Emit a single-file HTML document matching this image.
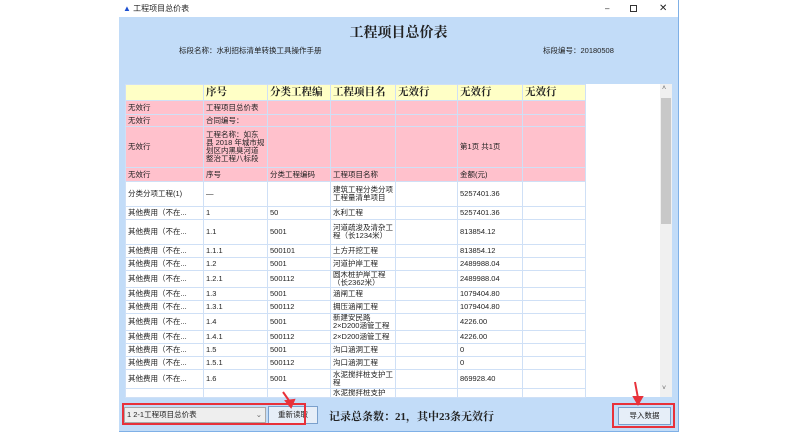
<!DOCTYPE html>
<html><head><meta charset="utf-8"><style>
*{margin:0;padding:0;box-sizing:border-box}
body{width:800px;height:437px;background:#fff;position:relative;overflow:hidden;font-family:"Liberation Sans","Noto Sans CJK SC",sans-serif;font-size:8px;color:#222}
.win{position:absolute;left:119px;top:0;width:560px;height:432px;background:#c2dcf8;border-right:1px solid #7fb0e6;border-bottom:1px solid #7fb0e6}
.tb{position:absolute;left:0;top:0;width:100%;height:17px;background:#fff;font-size:8px;line-height:17px}
.abs{position:absolute}
table{position:absolute;left:6px;top:84px;border-collapse:collapse;table-layout:fixed;background:#fff}
td{border:1px solid #cfe0f6;padding:0 2px;vertical-align:middle;line-height:8px;font-size:7.5px;overflow:hidden;white-space:nowrap}
td.w{white-space:normal}
tr.h td{background:#ffffc6;font-family:"Liberation Serif","Noto Serif CJK SC",serif;font-weight:bold;font-size:10.5px;line-height:12px}
tr.p td{background:#ffc1cc}
.red{position:absolute;border:2px solid #e8313a}
</style></head><body>
<div class="win">
 <div class="tb"><span style="color:#1c4fd0;margin-left:4px">▲</span> 工程项目总价表
  <span class="abs" style="left:486px;top:0">–</span><span class="abs" style="left:511px;top:5px;width:7px;height:7px;border:1px solid #333"></span><span class="abs" style="left:540px;top:0;font-size:10px">✕</span></div>
 <div class="abs" style="left:0;top:22px;width:100%;text-align:center;font-family:'Liberation Serif','Noto Serif CJK SC',serif;font-weight:bold;font-size:14px">工程项目总价表</div>
 <div class="abs" style="left:60px;top:45px;font-size:7.5px">标段名称：水利招标清单转换工具操作手册</div>
 <div class="abs" style="left:424px;top:45px;font-size:7.5px">标段编号：20180508</div>
 <div class="abs" style="left:6px;top:84px;width:547px;height:313px;background:#fff"></div>
 <div class="abs" style="left:541px;top:84px;width:12px;height:313px;background:#f0f0f0"></div>
 <div class="abs" style="left:542px;top:98px;width:10px;height:126px;background:#c8c8c8"></div>
 <div class="abs" style="left:543px;top:85px;font-size:7px;color:#666">˄</div>
 <div class="abs" style="left:543px;top:385px;font-size:7px;color:#666">˅</div>
 <table>
  <colgroup><col style="width:78px"><col style="width:64px"><col style="width:63px"><col style="width:65px"><col style="width:62px"><col style="width:65px"><col style="width:63px"></colgroup>
  <tr class="h" style="height:16px"><td></td><td>序号</td><td>分类工程编</td><td>工程项目名</td><td>无效行</td><td>无效行</td><td>无效行</td></tr>
  <tr class="p" style="height:14px"><td>无效行</td><td>工程项目总价表</td><td></td><td></td><td></td><td></td><td></td></tr>
  <tr class="p" style="height:12px"><td>无效行</td><td>合同编号：</td><td></td><td></td><td></td><td></td><td></td></tr>
  <tr class="p" style="height:41px"><td>无效行</td><td class="w">工程名称：如东县 2018 年城市规划区内黑臭河道整治工程八标段</td><td></td><td></td><td></td><td>第1页 共1页</td><td></td></tr>
  <tr class="p" style="height:14px"><td>无效行</td><td>序号</td><td>分类工程编码</td><td>工程项目名称</td><td></td><td>金额(元)</td><td></td></tr>
  <tr style="height:25px"><td>分类分项工程(1)</td><td>—</td><td></td><td class="w">建筑工程分类分项工程量清单项目</td><td></td><td>5257401.36</td><td></td></tr>
  <tr style="height:13px"><td>其他费用（不在...</td><td>1</td><td>50</td><td>水利工程</td><td></td><td>5257401.36</td><td></td></tr>
  <tr style="height:25px"><td>其他费用（不在...</td><td>1.1</td><td>5001</td><td class="w">河道疏浚及清杂工程（长1234米）</td><td></td><td>813854.12</td><td></td></tr>
  <tr style="height:13px"><td>其他费用（不在...</td><td>1.1.1</td><td>500101</td><td>土方开挖工程</td><td></td><td>813854.12</td><td></td></tr>
  <tr style="height:13px"><td>其他费用（不在...</td><td>1.2</td><td>5001</td><td>河道护岸工程</td><td></td><td>2489988.04</td><td></td></tr>
  <tr style="height:17px"><td>其他费用（不在...</td><td>1.2.1</td><td>500112</td><td class="w">圆木桩护岸工程（长2362米）</td><td></td><td>2489988.04</td><td></td></tr>
  <tr style="height:13px"><td>其他费用（不在...</td><td>1.3</td><td>5001</td><td>涵闸工程</td><td></td><td>1079404.80</td><td></td></tr>
  <tr style="height:13px"><td>其他费用（不在...</td><td>1.3.1</td><td>500112</td><td>拥压涵闸工程</td><td></td><td>1079404.80</td><td></td></tr>
  <tr style="height:17px"><td>其他费用（不在...</td><td>1.4</td><td>5001</td><td class="w">新建安民路2×D200涵管工程</td><td></td><td>4226.00</td><td></td></tr>
  <tr style="height:13px"><td>其他费用（不在...</td><td>1.4.1</td><td>500112</td><td>2×D200涵管工程</td><td></td><td>4226.00</td><td></td></tr>
  <tr style="height:13px"><td>其他费用（不在...</td><td>1.5</td><td>5001</td><td>沟口涵洞工程</td><td></td><td>0</td><td></td></tr>
  <tr style="height:13px"><td>其他费用（不在...</td><td>1.5.1</td><td>500112</td><td>沟口涵洞工程</td><td></td><td>0</td><td></td></tr>
  <tr style="height:19px"><td>其他费用（不在...</td><td>1.6</td><td>5001</td><td class="w">水泥搅拌桩支护工程</td><td></td><td>869928.40</td><td></td></tr>
  <tr style="height:9px"><td></td><td></td><td></td><td>水泥搅拌桩支护</td><td></td><td></td><td></td></tr>
 </table>
 <div class="abs" style="left:5px;top:407px;width:142px;height:16px;background:#eee;border:1px solid #aaa;font-size:7.5px;line-height:14px;padding-left:2px">1 2-1工程项目总价表<span style="position:absolute;right:3px;color:#666">⌄</span></div>
 <div class="abs" style="left:149px;top:406px;width:50px;height:18px;background:#e6eef8;border:1px solid #7aa0cc;font-size:7.5px;line-height:16px;text-align:center">重新读取</div>
 <div class="abs" style="left:210px;top:408px;font-family:'Liberation Serif','Noto Serif CJK SC',serif;font-weight:bold;font-size:11px">记录总条数：21，其中23条无效行</div>
 <div class="abs" style="left:499px;top:407px;width:53px;height:18px;background:#e6eef8;border:1px solid #7aa0cc;font-size:7.5px;line-height:16px;text-align:center">导入数据</div>
</div>
<div class="red" style="left:122px;top:403px;width:184px;height:22px"></div>
<div class="red" style="left:612px;top:403px;width:63px;height:25px"></div>
<svg class="abs" style="left:0;top:0" width="800" height="437"><g stroke="#e8313a" stroke-width="2" fill="#e8313a"><line x1="283" y1="392" x2="290" y2="402"/><polygon points="286,401 294,400 291,407"/><line x1="635" y1="382" x2="638" y2="398"/><polygon points="634,397 642,397 638,404"/></g></svg>
</body></html>
